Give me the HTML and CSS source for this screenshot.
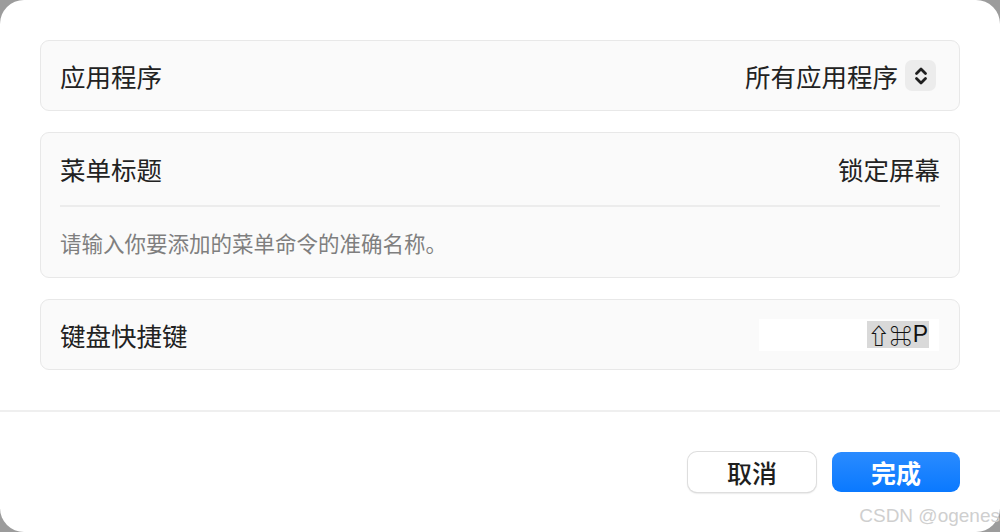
FILE: index.html
```html
<!DOCTYPE html>
<html lang="zh">
<head>
<meta charset="utf-8">
<link rel="stylesheet" href="styles.css">
</head>
<body>
<div class="dialog">
  <div class="content">
    <div class="card row">
      <span class="label">应用程序</span>
      <div class="value">
        <span>所有应用程序</span>
        <span class="stepper">
          <svg width="16" height="22" viewBox="0 0 16 22"><path d="M3.5 8.5 L8 4 L12.5 8.5 M3.5 13.5 L8 18 L12.5 13.5" fill="none" stroke="#1f1f1f" stroke-width="2.8" stroke-linecap="round" stroke-linejoin="round"/></svg>
        </span>
      </div>
    </div>
    <div class="card">
      <div class="row head">
        <span class="label">菜单标题</span>
        <span class="value">锁定屏幕</span>
      </div>
      <div class="divider"></div>
      <div class="hint">请输入你要添加的菜单命令的准确名称。</div>
    </div>
    <div class="card row">
      <span class="label">键盘快捷键</span>
      <div class="shortcut"><span class="keys"><span class="sym">⇧⌘</span><span class="letter">P</span></span></div>
    </div>
  </div>
  <div class="footer">
    <button class="btn cancel">取消</button>
    <button class="btn done">完成</button>
  </div>
  <div class="watermark">CSDN @ogenes</div>
</div>
</body>
</html>
```
FILE: styles.css
```css
html, body {
  margin: 0;
  padding: 0;
}
body {
  width: 1000px;
  height: 532px;
  background: #9c9c9c;
  font-family: "Noto Sans CJK SC", "Noto Sans", sans-serif;
  color: #222;
  overflow: hidden;
}
.dialog {
  position: relative;
  width: 1000px;
  height: 532px;
  background: #fff;
  border-radius: 24px;
  box-sizing: border-box;
}
.content {
  padding: 40px 40px 0;
  display: flex;
  flex-direction: column;
  gap: 21px;
}
.card {
  background: #fafafa;
  border: 1px solid #e8e8e8;
  border-radius: 9px;
  box-sizing: border-box;
}
.row {
  display: flex;
  align-items: center;
  justify-content: space-between;
  height: 71px;
  padding: 0 19px 0 19px;
}
.card.row {
  padding: 0 20px 0 19px;
}
.head {
  height: 72px;
  padding: 0 19px;
}
.label, .value {
  font-size: 25.5px;
  line-height: 32px;
}
.value {
  display: flex;
  align-items: center;
  gap: 7px;
}
.stepper {
  width: 31px;
  height: 31px;
  background: #ececec;
  border-radius: 7px;
  display: flex;
  align-items: center;
  justify-content: center;
  margin-right: 3px;
}
.divider {
  height: 2px;
  background: #ececec;
  margin: 0 19px;
}
.hint {
  height: 70px;
  display: flex;
  align-items: center;
  padding: 0 19px;
  font-size: 21.5px;
  color: #7f7f7f;
}
.shortcut {
  width: 180px;
  height: 32px;
  background: #fff;
  display: flex;
  justify-content: flex-end;
  align-items: center;
  padding-right: 10px;
  box-sizing: border-box;
}
.keys {
  background: #d9d9d9;
  height: 27px;
  line-height: 27px;
  padding: 0 1px;
  color: #111;
  display: flex;
  align-items: center;
}
.sym {
  font-family: "Noto Sans CJK SC", "DejaVu Sans", sans-serif;
  font-size: 22px;
  font-weight: 700;
}
.letter {
  font-family: "Liberation Sans", sans-serif;
  font-size: 23px;
  margin-left: 1px;
}
.footer {
  margin-top: 40px;
  border-top: 2px solid #efefef;
  display: flex;
  justify-content: flex-end;
  gap: 16px;
  padding: 40px 40px 0;
}
.btn {
  width: 128px;
  height: 40px;
  border-radius: 9px;
  font-family: "Noto Sans CJK SC", sans-serif;
  font-size: 25px;
  font-weight: 500;
  border: none;
  padding: 0;
}
.cancel {
  background: #fff;
  color: #1e1e1e;
  box-shadow: 0 0 0 1px #dedede, 0 1px 2px rgba(0,0,0,0.25);
}
.done {
  background: linear-gradient(#2a8bff, #0a79ff);
  color: #fff;
  font-weight: 700;
}
.watermark {
  position: absolute;
  right: 0;
  bottom: 5px;
  font-family: "Liberation Sans", sans-serif;
  font-size: 19px;
  color: #cfcfcf;
  white-space: nowrap;
}
```
